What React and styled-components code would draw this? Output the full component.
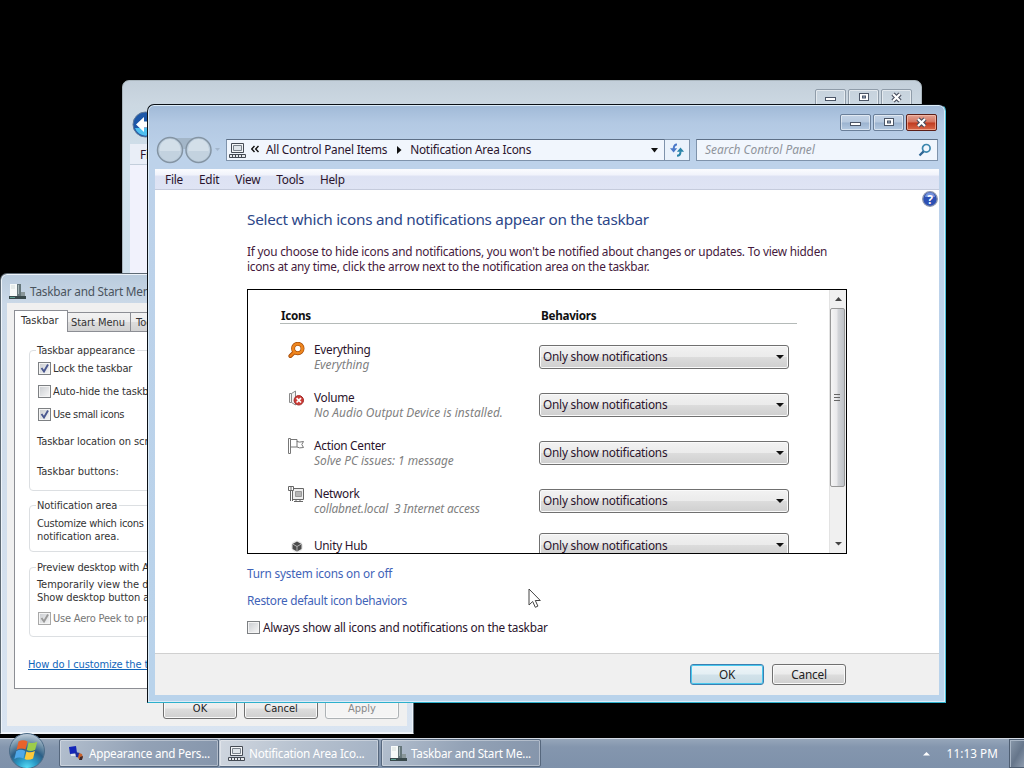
import React from 'react'
import styled, { createGlobalStyle, css } from 'styled-components'

const GlobalStyle = createGlobalStyle`
    body {
        margin: 0;
        background: #000;
        overflow: hidden;
    }
    * {
        box-sizing: border-box;
    }
`
const ui = `"Noto Sans", "Open Sans", sans-serif`
const tahoma = `"DejaVu Sans Condensed", "DejaVu Sans", sans-serif`

const Desktop = styled.div`
    position: relative;
    width: 1024px;
    height: 768px;
    overflow: hidden;
    background: #000;
    font-family: ${ui};
    font-size: 11.8px;
    letter-spacing: -0.215px;
    line-height: 15px;
    color: #2a142c;
    cursor: default;
`
const T = styled.span`
    white-space: pre;
    letter-spacing: ${p => (p.$ls === undefined ? 'inherit' : `${p.$ls}px`)};
`

/* ---------- window frames ---------- */
const Frame = styled.section`
    position: absolute;
    display: flex;
    flex-direction: column;
    border-radius: 7px 7px 0 0;
    overflow: hidden;
`
const BackWindow = styled(Frame)`
    left: 122px;
    top: 80px;
    width: 800px;
    height: 590px;
    border: 1px solid #a9b5bd;
    background: linear-gradient(#c3cfda 0, #ccd8e2 24px, #cfe0ec 84px, #d7e4f0 100%);
    padding: 0 7px 7px;
`
const Properties = styled(Frame)`
    left: 0;
    top: 273px;
    width: 414px;
    height: 461px;
    border: 1px solid #5e6a74;
    border-bottom-color: #f4f6fa;
    box-shadow: inset 0 0 0 1px #eef4fa;
    background: linear-gradient(#b9cbdd 0, #cbd9e8 30px, #d9e4f1 100%);
    padding: 0 6px 7px;
    font-family: ${tahoma};
    font-size: 11px;
    letter-spacing: 0;
    line-height: 13px;
    color: #333;
`
const MainWindow = styled(Frame)`
    left: 147px;
    top: 104px;
    width: 799px;
    height: 599px;
    border: 1px solid #0b1016;
    border-right-color: #4cc0da;
    border-bottom-color: #2cb0cc;
    box-shadow: inset 0 0 0 1px #dcecf8;
    background: linear-gradient(#a0b9d7 0, #b3c9e3 18px, #bdd2ea 50px, #b9d3eb 100%);
    padding: 1px 6px 7px 7px;
`
const CaptionButtons = styled.div`
    display: flex;
    justify-content: flex-end;
    gap: 2px;
    height: 27px;
    padding: 8px ${p => p.$right}px 0 0;
    flex: none;
`
const CaptionButton = styled.div`
    width: 31px;
    height: 17px;
    display: flex;
    align-items: center;
    justify-content: center;
    border: 1px solid #6a7f99;
    border-radius: 2px;
    box-shadow: inset 0 0 0 1px rgba(255, 255, 255, 0.5);
    background: linear-gradient(#c3d3e6 0, #b7c9df 48%, #9bb3cf 52%, #b5cae2 100%);
    ${p => p.$faded && css`
        border-color: #8f9ca9;
        background: none;
    `}
    ${p => p.$close && css`
        border-color: #5c1f18;
        box-shadow: inset 0 0 0 1px rgba(255, 200, 180, 0.6);
        background: linear-gradient(#e2a293 0, #d4735e 48%, #bf3a1f 52%, #d9694a 100%);
    `}
`

/* ---------- explorer parts ---------- */
const AddressRow = styled.div`
    display: flex;
    align-items: center;
    height: 36px;
    padding-bottom: 2px;
    flex: none;
`
const NavButtons = styled.div`
    width: 70px;
    height: 30px;
    display: flex;
`
const Field = styled.div`
    display: flex;
    align-items: center;
    height: 22px;
    border: 1px solid #7f93ab;
    border-top-color: #5d6f86;
    background: #f1f6fd;
`
const AddressBar = styled(Field)`
    width: 439px;
    margin-left: 1px;
    padding-left: 2px;
`
const AddressText = styled.div`
    display: flex;
    align-items: center;
    flex: 1;
    padding: 0 0 1px 5px;
`
const Refresh = styled.div`
    width: 25px;
    height: 22px;
    border: 1px solid #7f93ab;
    border-left: 0;
    background: #eaf2fb;
    display: flex;
    align-items: center;
    justify-content: center;
`
const Search = styled(Field)`
    width: 242px;
    margin-left: 6px;
    padding: 0 5px 1px 8px;
    justify-content: space-between;
    font-size: 11.9px;
    letter-spacing: 0;
    font-style: italic;
    color: #8f949c;
`
const MenuBar = styled.nav`
    display: flex;
    align-items: center;
    gap: 16px;
    height: 21px;
    padding: 0 0 0 10px;
    flex: none;
    border-bottom: 1px solid #c5cbdc;
    background: linear-gradient(#fbfcfe 0, #f1f3fb 28%, #dde2f3 38%, #dfe4f4 100%);
    ${p => p.$faded && css`
        border-color: #c3cedb;
        background: #e9eef7;
    `}
`
const Client = styled.main`
    position: relative;
    flex: 1;
    background: ${p => (p.$faded ? '#f1f2fc' : '#fff')};
    padding: 20px 0 0 92px;
`
const Help = styled.svg`
    position: absolute;
    right: 1px;
    top: 1px;
`
const Heading = styled.h1`
    margin: 0;
    height: 18px;
    font-size: 15.3px;
    letter-spacing: -0.265px;
    line-height: 18px;
    font-weight: 400;
    color: #2c4688;
`
const Intro = styled.p`
    margin: 16px 0 0;
    color: #451a3c;
`
const ListBox = styled.div`
    display: flex;
    width: 600px;
    height: 265px;
    margin-top: 15px;
    border: 1px solid #000;
    overflow: hidden;
`
const List = styled.div`
    flex: 1;
    height: 263px;
    overflow: hidden;
`
const ListHead = styled.div`
    display: grid;
    grid-template-columns: 260px 1fr;
    width: 517px;
    height: 34px;
    margin: 0 0 9px 32px;
    padding: 18px 0 0 1px;
    border-bottom: 1px solid #b4bab8;
    font-size: 11.7px;
    letter-spacing: -0.3px;
    font-weight: 700;
    color: #111;
`
const Row = styled.div`
    display: grid;
    grid-template-columns: 26px 225px 250px;
    align-items: center;
    height: ${p => p.$h || 48}px;
    padding-left: 40px;
`
const RowIcon = styled.div`
    height: ${p => p.$h || 30}px;
    display: flex;
`
const RowText = styled.div`
    display: flex;
    flex-direction: column;
    em {
        font-size: 11.9px;
        letter-spacing: -0.03px;
        color: #808080;
    }
`
const Select = styled.div`
    display: flex;
    align-items: center;
    justify-content: space-between;
    height: 24px;
    margin-bottom: 1px;
    padding: 0 4px 0 3px;
    border: 1px solid #707070;
    border-radius: 3px;
    box-shadow: inset 0 0 0 1px #fafafa;
    background: linear-gradient(#f2f2f2 0, #ebebeb 49%, #dcdcdc 51%, #cfcfcf 100%);
`
const ScrollBar = styled.div`
    display: flex;
    flex-direction: column;
    width: 17px;
    background: #f0f0f0;
    border-left: 1px solid #e3e3e3;
`
const ScrollArrow = styled.div`
    height: 18px;
    display: flex;
    align-items: center;
    justify-content: center;
    margin-top: ${p => (p.$last ? 'auto' : 0)};
`
const Thumb = styled.div`
    width: 15px;
    height: 179px;
    border: 1px solid #979797;
    border-radius: 2px;
    background: linear-gradient(90deg, #f5f5f5 0, #e9e9eb 45%, #d2d4d8 55%, #bfc3c8 100%);
    display: flex;
    align-items: center;
    justify-content: center;
`
const Links = styled.div`
    display: flex;
    flex-direction: column;
    gap: 12px;
    margin-top: 12px;
    color: #3f63b8;
`
const CheckRow = styled.label`
    display: flex;
    align-items: center;
    gap: ${p => p.$gap || 2}px;
    margin-top: ${p => p.$top || 0}px;
    color: ${p => (p.$off ? '#777' : 'inherit')};
`
const Box = styled.span`
    width: 13px;
    height: 13px;
    flex: none;
    display: flex;
    border: 1px solid ${p => (p.$off ? '#a8a8a8' : '#7d8083')};
    background: linear-gradient(135deg, #c9ccd0, #f8f8f8);
    box-shadow: inset 0 0 0 1px #f4f4f4;
`
const Footer = styled.footer`
    display: flex;
    justify-content: flex-end;
    gap: 8px;
    height: 42px;
    flex: none;
    padding: 10px 93px 0 0;
    border-top: 1px solid #d0d0d0;
    background: #f0f0f0;
`
const Button = styled.button`
    width: 74px;
    height: 21px;
    padding: 0;
    font: inherit;
    letter-spacing: inherit;
    color: #222;
    border: 1px solid #707070;
    border-radius: 3px;
    box-shadow: inset 0 0 0 1px #fafafa;
    background: linear-gradient(#f3f3f3 0, #ebebeb 49%, #dddddd 51%, #cfcfcf 100%);
    ${p => p.$default && css`
        border-color: #3c7fb1;
        box-shadow: inset 0 0 0 1px #48c8ee;
        background: linear-gradient(#eef4f7 0, #e4eff4 49%, #d2e2ea 51%, #c8dbe4 100%);
    `}
    ${p => p.$off && css`
        color: #888;
        border-color: #adb2b5;
        background: #f4f4f4;
    `}
`

/* ---------- properties dialog ---------- */
const DialogTitle = styled.div`
    display: flex;
    align-items: center;
    gap: 4px;
    height: 29px;
    padding: 6px 0 0 2px;
    flex: none;
    font-family: ${ui};
    font-size: 11.8px;
    letter-spacing: -0.22px;
    color: #4a545e;
`
const DialogBody = styled.div`
    flex: 1;
    background: #f0f0f0;
    padding: 7px 7px 0;
`
const Tabs = styled.div`
    display: flex;
    align-items: flex-end;
    height: 21px;
`
const Tab = styled.div`
    height: 19px;
    padding: 3px 5px 0 3px;
    border: 1px solid #8c8e94;
    border-left: 0;
    border-bottom: 0;
    background: linear-gradient(#f2f2f2 0, #ebebeb 49%, #dddddd 51%, #d2d2d2 100%);
    white-space: nowrap;
    &:last-child {
        padding-left: 5px;
    }
    ${p => p.$active && css`
        height: 22px;
        width: 54px;
        margin-bottom: -1px;
        padding: 3px 6px 0;
        border-left: 1px solid #8c8e94;
        background: #fff;
        z-index: 1;
    `}
`
const Page = styled.div`
    height: 358px;
    border: 1px solid #8c8e94;
    background: #fff;
    padding: 12px 14px 0;
`
const Group = styled.fieldset`
    margin: 0 0 ${p => p.$gap || 0}px;
    height: ${p => p.$h}px;
    min-width: 0;
    padding: 0 0 0 7px;
    border: 1px solid #dcdfe2;
    border-radius: 4px;
    legend {
        padding: 0 2px 0 1px;
        margin-left: -1px;
    }
`
/* checkboxes sit one pixel right of the plain text */
const Checks = styled.div`
    padding-left: 1px;
`
const Para = styled.div`
    margin-top: ${p => p.$top || 0}px;
`
const HelpLink = styled.div`
    margin: 21px 0 0 -1px;
    color: #1166bb;
    text-decoration: underline;
`
const DialogButtons = styled.div`
    display: flex;
    justify-content: flex-end;
    gap: 7px;
    padding: 9px 1px 0 0;
`

/* ---------- taskbar ---------- */
const Taskbar = styled.div`
    position: absolute;
    left: 0;
    bottom: 0;
    width: 1024px;
    height: 30px;
    display: flex;
    align-items: stretch;
    border-top: 1px solid #d3dae4;
    background: linear-gradient(#96a6ba 0, #8496ae 8px, #7e91aa 100%);
    font-size: 11.7px;
    letter-spacing: -0.24px;
    color: #fff;
`
const Start = styled.svg`
    width: 54px;
    height: 36px;
    margin: -7px 5px 0 0;
    flex: none;
`
const Task = styled.div`
    display: flex;
    align-items: center;
    gap: ${p => p.$gap || 4}px;
    width: 160px;
    height: 28px;
    padding-left: 8px;
    margin-left: ${p => p.$ml || 0}px;
    border: 1px solid #56677d;
    border-radius: 2px;
    box-shadow: inset 0 0 0 1px rgba(255, 255, 255, 0.35);
    background: linear-gradient(110deg, #b3bfce 0, #93a2b6 50%, #8595ab 100%);
    ${p => p.$active && css`
        border-left-color: #c5ceda;
        background: linear-gradient(110deg, #cfd6df 0, #b6c1cf 50%, #a4b2c4 100%);
    `}
`
const Tray = styled.div`
    margin-left: auto;
    display: flex;
    align-items: center;
    gap: 16px;
`
const ShowDesktop = styled.div`
    width: 15px;
    height: 29px;
    margin-left: -5px;
    border: 1px solid #4e5e72;
    border-right: 0;
    box-shadow: inset 1px 1px 0 #a9b6c6;
    background: linear-gradient(120deg, #8a99ab 0, #66768b 55%, #8e9cae 100%);
`
const Pointer = styled.svg`
    position: absolute;
    left: 528px;
    top: 588px;
`
const BackButton = styled.svg`
    margin: 0 0 1px 2px;
`

/* ---------- drawings ---------- */
const MinGlyph = () => (
    <svg width='13' height='11'><rect x='1.5' y='5.5' width='10' height='3' fill='#fff' stroke='#4b5566' /></svg>
)
const MaxGlyph = () => (
    <svg width='12' height='11'>
        <rect x='1.5' y='1.5' width='9' height='7' fill='#fff' stroke='#4b5566' />
        <rect x='4.5' y='4' width='3' height='2' fill='#9fb2cb' stroke='#4b5566' />
    </svg>
)
const CloseGlyph = () => (
    <svg width='13' height='11' fill='none'>
        <path d='M3 2l7 7M10 2l-7 7' stroke='#454c5c' strokeWidth='4.4' />
        <path d='M3 2l7 7M10 2l-7 7' stroke='#fff' strokeWidth='2.2' />
    </svg>
)
const Caption = ({ right, faded }) => (
    <CaptionButtons $right={right}>
        <CaptionButton $faded={faded}><MinGlyph /></CaptionButton>
        <CaptionButton $faded={faded}><MaxGlyph /></CaptionButton>
        <CaptionButton $faded={faded} $close={!faded}><CloseGlyph /></CaptionButton>
    </CaptionButtons>
)
const Down = ({ w = 8, c = '#111' }) => (
    <svg width={w} height={w / 2} viewBox='0 0 8 4'><path d='M0 0h8L4 4z' fill={c} /></svg>
)
const PanelIcon = () => (
    <svg width='17' height='17' fill='none' stroke='#454b54'>
        <path d='M2.5 1.5h12v9h-12z' fill='#f4f6f8' />
        <path d='M4.5 3.5h8v5h-8z' fill='#dfe5ea' stroke='#7b838c' />
        <path d='M.5 12.5h16v3H.5z' fill='#e6e9ec' />
        <path d='M3.5 13v2M6.5 13v2M9.5 13v2M12.5 13v2' />
    </svg>
)
const StartMenuIcon = () => (
    <svg width='17' height='17'>
        <path d='M1 1h7v12H1z' fill='#f7faf9' />
        <path d='M2 3h4M2 5h4' stroke='#d5dedb' />
        <path d='M8 1h4v12H8z' fill='#66777b' />
        <path d='M9 2h1v9H9z' fill='#a4b4b6' />
        <path d='M12 9h4v4h-4z' fill='#8a979a' />
        <path d='M0 13h17v3H0z' fill='#39494c' />
        <path d='M1 14h5v1H1z' fill='#5fa293' />
    </svg>
)
const AppearanceIcon = () => (
    <svg width='16' height='16'>
        <path d='M1 2l7-1 1 7-7 1z' fill='#1426b8' />
        <path d='M3 9h6v2H3z' fill='#dfe3ee' />
        <path d='M7 7l5 1 1 5-5-1z' fill='#1c2c9c' />
        <path d='M11 8l3 1 1 4-3 2-2-2z' fill='#c9622b' />
        <path d='M12 12l3-1-1 4h-3z' fill='#3a2a30' />
    </svg>
)
const Magnifier = () => (
    <svg width='14' height='14' fill='none'>
        <circle cx='8.3' cy='5.3' r='3.8' stroke='#3b86ae' strokeWidth='1.7' />
        <path d='M5.6 8.4L1.5 12.5' stroke='#2d6594' strokeWidth='2.2' />
    </svg>
)
const RefreshIcon = () => (
    <svg width='16' height='16' fill='none' strokeWidth='2'>
        <path d='M8 2.4C5.5 2.4 4.7 4 4.7 7' stroke='#4a78c8' />
        <path d='M1 6.2h7.2L4.6 10.4z' fill='#4a78c8' />
        <path d='M8 13.8c2.5 0 3.5-1.6 3.5-4.6' stroke='#2a84a8' />
        <path d='M7.9 9.8h7.2L11.5 5.6z' fill='#2a84a8' />
    </svg>
)
const icons = {
    everything: (
        <svg width='17' height='17' fill='none'>
            <path d='M6.2 10.3L2.4 14' stroke='#a34a07' strokeWidth='4' strokeLinecap='round' />
            <circle cx='9.8' cy='6.5' r='4.7' stroke='#a34a07' strokeWidth='4' />
            <path d='M6.2 10.3L2.4 14' stroke='#ee7f18' strokeWidth='2.4' strokeLinecap='round' />
            <circle cx='9.8' cy='6.5' r='4.7' stroke='#ee861f' strokeWidth='2.7' />
        </svg>
    ),
    volume: (
        <svg width='17' height='17' fill='none'>
            <path d='M1.5 3.5h2v9h-2zM3.5 3.5L7.5 1v14l-4-2.5' fill='#f2f2f2' stroke='#8a8a8a' />
            <circle cx='10.8' cy='10.3' r='4.7' fill='#cf3b36' stroke='#9f2a28' />
            <path d='M8.6 8.1l4.400 4.400M13 8.1l-4.400 4.400' stroke='#fff' strokeWidth='1.7' />
        </svg>
    ),
    flag: (
        <svg width='17' height='17' fill='none' stroke='#777'>
            <path d='M.5.5h2v15h-2z' fill='#fff' />
            <path d='M2.5 1.5h6.5v2q2 1.2 6.5 0l-1.7 3 1.7 3q-4.5 1-6.5-.5h-6.5z' fill='#fff' />
            <path d='M9 3v6' />
        </svg>
    ),
    network: (
        <svg width='17' height='17' fill='none' stroke='#666'>
            <path d='M4.5 2.5h11v11h-11z' fill='#eee' />
            <path d='M7.5 5.5h6v5h-6z' fill='#b5b5b5' stroke='#999' />
            <path d='M6 15.5h9M8 13v2M12 13v2' />
            <path d='M.5.5h5v4h-5z' fill='#fff' />
            <path d='M3 1v3M2.5 5v10M4.5 5v10' />
        </svg>
    ),
    unity: (
        <svg width='17' height='13'>
            <circle cx='9' cy='6.5' r='6' fill='#e9e9e9' />
            <path d='M9 1.5l4.5 2.5v5L9 11.5 4.5 9V4z' fill='#4a4a4a' />
            <path d='M9 6.5L5 4.2M9 6.5l4-2.3M9 6.5V11' stroke='#bbb' strokeWidth='.9' />
        </svg>
    ),
}
const Check = ({ c = '#4a5890' }) => (
    <svg width='11' height='11' fill='none'><path d='M2.5 5l2.5 3.5L9 1.5' stroke={c} strokeWidth='1.9' /></svg>
)

const rows = [
    { icon: 'everything', name: 'Everything', info: 'Everything' },
    { icon: 'volume', name: 'Volume', info: 'No Audio Output Device is installed.', ls: 0.04 },
    { icon: 'flag', name: 'Action Center', info: 'Solve PC issues: 1 message' },
    { icon: 'network', name: 'Network', info: 'collabnet.local  3 Internet access', ls: -0.17 },
    { icon: 'unity', name: 'Unity Hub' },
]

const Appearance = () => (
    <BackWindow>
        <Caption right={2} faded />
        <AddressRow>
            <BackButton width='27' height='27'>
                <circle cx='13.5' cy='13.5' r='12.5' fill='#1c57a8' stroke='#5f7898' />
                <path d='M3 17a11 11 0 0 0 21 0z' fill='#4fc0ee' />
                <path d='M12 6v4.5h9v6h-9V21l-8-7.5z' fill='#fff' />
            </BackButton>
        </AddressRow>
        <MenuBar $faded><T>File</T></MenuBar>
        <Client $faded />
    </BackWindow>
)

const TaskbarProperties = () => (
    <Properties>
        <DialogTitle><StartMenuIcon /><T>Taskbar and Start Menu Properties</T></DialogTitle>
        <DialogBody>
            <Tabs>
                <Tab $active><T>Taskbar</T></Tab>
                <Tab><T $ls={-0.05}>Start Menu</T></Tab>
                <Tab><T>Toolbars</T></Tab>
            </Tabs>
            <Page>
                <Group $h={147} $gap={8}>
                    <legend><T $ls={-0.08}>Taskbar appearance</T></legend>
                    <Checks>
                        <CheckRow $top={5}><Box><Check /></Box><T $ls={-0.2}>Lock the taskbar</T></CheckRow>
                        <CheckRow $top={10}><Box /><T $ls={-0.12}>Auto-hide the taskbar</T></CheckRow>
                        <CheckRow $top={10}><Box><Check /></Box><T $ls={-0.38}>Use small icons</T></CheckRow>
                    </Checks>
                    <Para $top={14}><T $ls={-0.08}>Taskbar location on screen:</T></Para>
                    <Para $top={17}><T>Taskbar buttons:</T></Para>
                </Group>
                <Group $h={53} $gap={9}>
                    <legend><T $ls={-0.1}>Notification area</T></legend>
                    <Para $top={5}><T $ls={-0.29}>Customize which icons</T><br /><T $ls={-0.1}>notification area.</T></Para>
                </Group>
                <Group $h={76}>
                    <legend><T $ls={-0.15}>Preview desktop with Aero Peek</T></legend>
                    <Para $top={4}><T $ls={-0.05}>Temporarily view the desktop</T><br /><T $ls={-0.1}>Show desktop button at</T></Para>
                    <Checks>
                        <CheckRow $top={8} $off><Box $off><Check c='#999' /></Box><T $ls={-0.2}>Use Aero Peek to preview</T></CheckRow>
                    </Checks>
                </Group>
                <HelpLink><T $ls={-0.12}>How do I customize the taskbar?</T></HelpLink>
            </Page>
            <DialogButtons>
                <Button>OK</Button>
                <Button>Cancel</Button>
                <Button $off>Apply</Button>
            </DialogButtons>
        </DialogBody>
    </Properties>
)

const NotificationIcons = () => (
    <MainWindow>
        <Caption right={2} />
        <AddressRow>
            <NavButtons>
                <svg width='70' height='30'>
                    <path d='M14 3h30v7q-15 8-30 0z' fill='#a3b6c8' />
                    <g fill='#bccddc' stroke='#8494a3' strokeWidth='1.5'>
                        <circle cx='15' cy='15' r='12.5' />
                        <circle cx='43.5' cy='15' r='12.5' />
                    </g>
                    <g fill='#d3dfe9'>
                        <circle cx='15' cy='14.5' r='10.5' />
                        <circle cx='43.5' cy='14.5' r='10.5' />
                    </g>
                    <path d='M5 16a10 10 0 0 0 20 0zM33.5 16a10 10 0 0 0 20 0z' fill='#c3d2df' />
                    <path d='M60 13h5l-2.5 3z' fill='#a3b6cc' />
                </svg>
            </NavButtons>
            <AddressBar>
                <PanelIcon />
                <AddressText>
                    <svg width='15' height='9' fill='none' stroke='#111' strokeWidth='1.4'>
                        <path d='M3.5 1L.7 4l2.8 3M7.5 1L4.7 4l2.8 3' />
                    </svg>
                    <T>All Control Panel Items</T>
                    <svg width='23' height='8'><path d='M10 0l4.5 4L10 8z' fill='#111' /></svg>
                    <T>Notification Area Icons</T>
                </AddressText>
                <svg width='16' height='5'><path d='M3 0h7L6.5 4.5z' fill='#111' /></svg>
            </AddressBar>
            <Refresh><RefreshIcon /></Refresh>
            <Search><T>Search Control Panel</T><Magnifier /></Search>
        </AddressRow>
        <MenuBar><T>File</T><T>Edit</T><T>View</T><T>Tools</T><T>Help</T></MenuBar>
        <Client>
            <Help width='16' height='16'>
                <circle cx='8' cy='8' r='7.3' fill='#2c50b4' stroke='#8c95ad' strokeWidth='1.3' />
                <path d='M3 6a5 4.5 0 0 1 10 0z' fill='#7693dc' />
                <text x='8' y='12.5' textAnchor='middle' fontSize='12' fontWeight='700' fill='#fff'>?</text>
            </Help>
            <Heading><T>Select which icons and notifications appear on the taskbar</T></Heading>
            <Intro>
                <T>If you choose to hide icons and notifications, you won't be notified about changes or updates. To view hidden</T><br />
                <T $ls={-0.24}>icons at any time, click the arrow next to the notification area on the taskbar.</T>
            </Intro>
            <ListBox>
                <List>
                    <ListHead><T>Icons</T><T>Behaviors</T></ListHead>
                    {rows.map(r => (
                        <Row key={r.icon} $h={r.info ? 48 : 41}>
                            <RowIcon $h={r.info ? 30 : 12}>{icons[r.icon]}</RowIcon>
                            <RowText>
                                <T $ls={-0.27}>{r.name}</T>
                                {r.info && <em><T $ls={r.ls}>{r.info}</T></em>}
                            </RowText>
                            <Select><T>Only show notifications</T><Down /></Select>
                        </Row>
                    ))}
                </List>
                <ScrollBar>
                    <ScrollArrow><svg width='7' height='4'><path d='M0 4h7L3.5 0z' fill='#444' /></svg></ScrollArrow>
                    <Thumb>
                        <svg width='7' height='8' stroke='#666'><path d='M0 .5h6M0 3.5h6M0 6.5h6' /></svg>
                    </Thumb>
                    <ScrollArrow $last><Down w={7} c='#444' /></ScrollArrow>
                </ScrollBar>
            </ListBox>
            <Links>
                <T $ls={-0.2}>Turn system icons on or off</T>
                <T $ls={-0.28}>Restore default icon behaviors</T>
            </Links>
            <CheckRow $top={12} $gap={3}><Box /><T $ls={-0.23}>Always show all icons and notifications on the taskbar</T></CheckRow>
        </Client>
        <Footer>
            <Button $default>OK</Button>
            <Button>Cancel</Button>
        </Footer>
    </MainWindow>
)

export default function App() {
    return (
        <Desktop>
            <GlobalStyle />
            <Appearance />
            <TaskbarProperties />
            <NotificationIcons />
            <Taskbar>
                <Start viewBox='0 0 54 36'>
                    <defs>
                        <radialGradient id='orb' cx='.5' cy='1' r='1'>
                            <stop offset='0' stopColor='#5ce0f8' />
                            <stop offset='.28' stopColor='#2a9cc8' />
                            <stop offset='.55' stopColor='#2c5f86' />
                            <stop offset='.75' stopColor='#6f90a8' />
                            <stop offset='1' stopColor='#c3d0dc' />
                        </radialGradient>
                    </defs>
                    <circle cx='27' cy='19' r='17.5' fill='url(#orb)' stroke='#4c6c88' />
                    <path d='M18.5 9.5q4.5-2.5 9 0l-2 8q-4.500-2-9 .5z' fill='#e8622a' />
                    <path d='M28.7 10.2q4 2 8.5-.5l-2 8q-4.500 2.500-8.500.2z' fill='#9ccc4a' />
                    <path d='M16.2 19.200q4.500-2.500 9-.3l-1.800 7.500q-4.500-2-9 .5z' fill='#4fa8e8' />
                    <path d='M26.4 19.400q4 2 8.500-.4l-1.800 7.500q-4.500 2.500-8.500.4z' fill='#fcc93a' />
                </Start>
                <Task $gap={5}><AppearanceIcon /><T>Appearance and Pers...</T></Task>
                <Task $active><PanelIcon /><T>Notification Area Ico...</T></Task>
                <Task $ml={2}><StartMenuIcon /><T>Taskbar and Start Me...</T></Task>
                <Tray>
                    <svg width='9' height='5'><path d='M1 4.500h7L4.500 1z' fill='#fff' /></svg>
                    <T $ls={0.1}>11:13 PM</T>
                    <ShowDesktop />
                </Tray>
            </Taskbar>
            <Pointer width='14' height='21'>
                <path d='M1 1v16l3.7-3.5 2.6 5.8 2.6-1.2-2.6-5.6h5z' fill='#fff' stroke='#444' />
            </Pointer>
        </Desktop>
    )
}
